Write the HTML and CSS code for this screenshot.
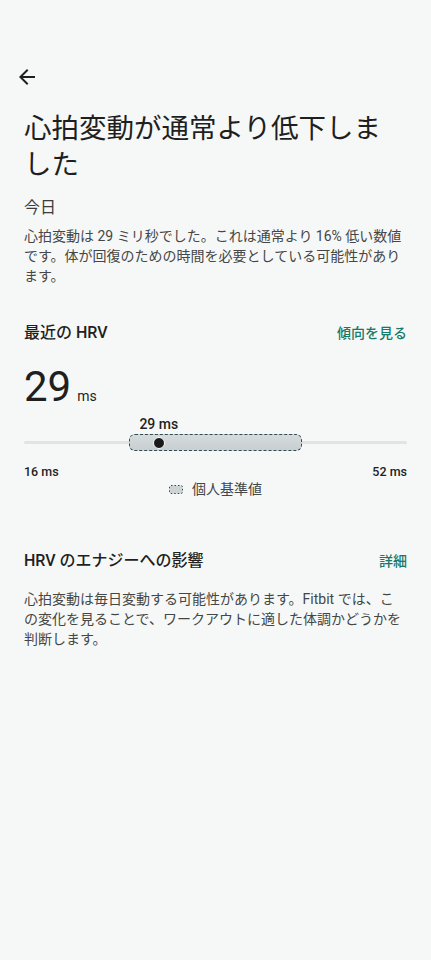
FILE: index.html
```html
<!DOCTYPE html>
<html lang="ja">
<head>
  <meta charset="UTF-8" />
  <meta name="viewport" content="width=device-width, initial-scale=1.0" />
  <title>心拍変動</title>
  <link rel="stylesheet" href="styles.css">
</head>
<body>
  <div class="page">
    <button class="back-btn" aria-label="戻る">
      <svg width="24" height="24" viewBox="0 0 24 24"><path d="M20 11H7.83l5.59-5.59L12 4l-8 8 8 8 1.41-1.41L7.83 13H20v-2z" fill="#1f1f1f"/></svg>
    </button>

    <h1 class="title">心拍変動が通常より低下しました</h1>
    <p class="date">今日</p>
    <p class="text">心拍変動は 29 ミリ秒でした。これは通常より 16% 低い数値です。体が回復のための時間を必要としている可能性があります。</p>

    <section class="hrv">
      <div class="section-head">
        <h2>最近の HRV</h2>
        <a href="#" class="link">傾向を見る</a>
      </div>

      <div class="big-value">29<span class="unit">ms</span></div>

      <div class="chart">
        <div class="chart-label-row">
          <span class="chart-label" style="left: 35.2%">29 ms</span>
        </div>
        <div class="chart-bar">
          <div class="chart-range" style="left: 27.4%; width: 45.2%"></div>
          <div class="chart-dot" style="left: 35.2%"></div>
        </div>
        <div class="chart-axis">
          <span>16 ms</span>
          <span>52 ms</span>
        </div>
        <div class="legend">
          <svg width="14" height="9" viewBox="0 0 14 9"><rect x="0.5" y="0.5" width="13" height="8" rx="1.5" fill="#cdd3d5" stroke="#2f4c52" stroke-dasharray="1.5 2"/></svg>
          <span>個人基準値</span>
        </div>
      </div>
    </section>

    <section class="energy">
      <div class="section-head">
        <h2>HRV のエナジーへの影響</h2>
        <a href="#" class="link">詳細</a>
      </div>
      <p class="text">心拍変動は毎日変動する可能性があります。Fitbit では、この変化を見ることで、ワークアウトに適した体調かどうかを判断します。</p>
    </section>
  </div>
</body>
</html>
```

FILE: styles.css
```css
body {
  margin: 0;
  background-color: #f6f8f7;
  color: #1f1f1f;
  font-family: Roboto, "Noto Sans CJK JP", sans-serif;
}
.page {
  padding: 65px 24px 40px;
}
.back-btn {
  display: block;
  width: 24px;
  height: 24px;
  margin-left: -9px;
  padding: 0;
  border: none;
  background: none;
  cursor: pointer;
}
.back-btn svg {
  display: block;
}
.title {
  margin: 22px 0 0;
  font-size: 27.5px;
  line-height: 36px;
  font-weight: 400;
}
.date {
  margin: 13px 0 0;
  font-size: 16px;
  line-height: 24px;
  color: #3c3c3c;
}
.text {
  margin: 6px 0 0;
  font-size: 14px;
  line-height: 20px;
  color: #444746;
}
.section-head {
  display: flex;
  justify-content: space-between;
  align-items: center;
}
.section-head h2 {
  margin: 0;
  font-size: 16px;
  line-height: 24px;
  font-weight: 500;
}
.link {
  font-size: 14px;
  line-height: 24px;
  font-weight: 500;
  color: #17796a;
  text-decoration: none;
}
.hrv {
  margin-top: 35px;
}
.big-value {
  margin-top: 21px;
  font-size: 42px;
  line-height: 42px;
}
.unit {
  margin-left: 6px;
  font-size: 14px;
  line-height: 14px;
}
.chart {
  margin-top: 6px;
}
.chart-label-row {
  position: relative;
  height: 20px;
}
.chart-label {
  position: absolute;
  top: 0;
  transform: translateX(-50%);
  font-size: 14px;
  line-height: 20px;
  font-weight: 500;
}
.chart-bar {
  position: relative;
  height: 17px;
}
.chart-bar::before {
  content: "";
  position: absolute;
  left: 0;
  right: 0;
  top: 7px;
  height: 3px;
  border-radius: 2px;
  background-color: #e2e4e3;
}
.chart-range {
  position: absolute;
  top: 0;
  bottom: 0;
  box-sizing: border-box;
  border: 1px dashed #2f4c52;
  border-radius: 6px;
  background: linear-gradient(#d6dbdc, #c8cfd0);
}
.chart-dot {
  position: absolute;
  top: 50%;
  width: 10px;
  height: 10px;
  border: 1.5px solid #fff;
  border-radius: 50%;
  background-color: #1a1a1a;
  transform: translate(-50%, -50%);
}
.chart-axis {
  display: flex;
  justify-content: space-between;
  margin-top: 13px;
  font-size: 12.5px;
  line-height: 16px;
  font-weight: 500;
}
.legend {
  display: flex;
  justify-content: center;
  align-items: center;
  gap: 9px;
  margin-top: -1px;
  font-size: 14px;
  line-height: 20px;
  color: #444746;
}
.legend svg {
  display: block;
}
.energy {
  margin-top: 50px;
}
.energy .text {
  margin-top: 16px;
}
```
